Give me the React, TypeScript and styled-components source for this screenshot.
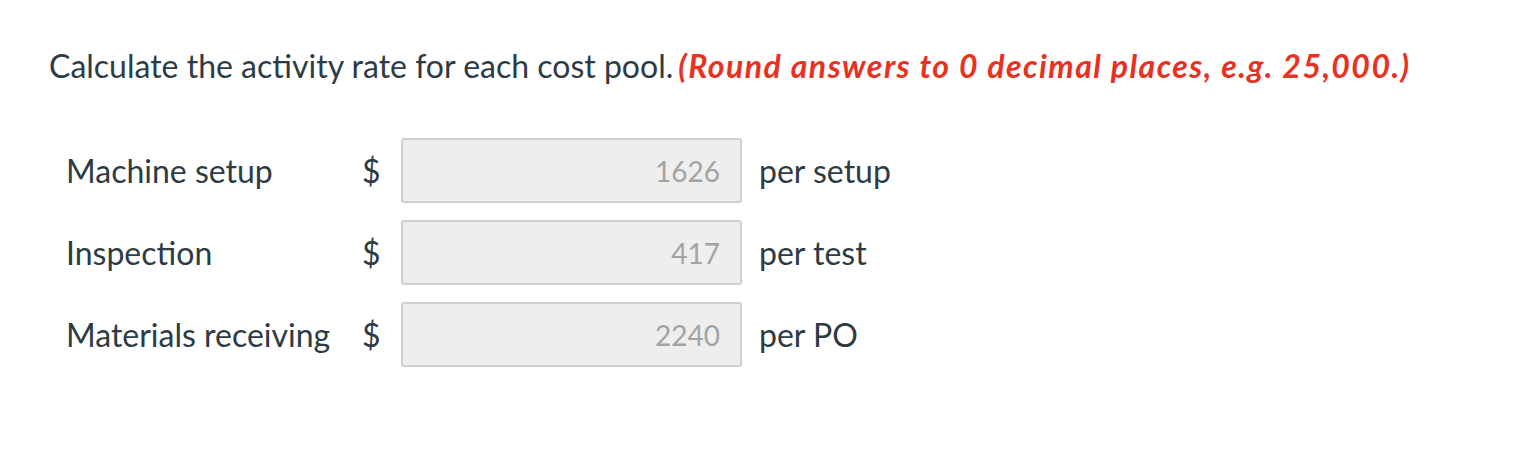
import React from "react";
import styled, { createGlobalStyle } from "styled-components";

const Global = createGlobalStyle`
  html, body { margin: 0; padding: 0; background: #fff; }
  body { font-family: Lato, "Noto Sans", sans-serif; color: #2d3b45; }
`;

const Page = styled.div`
  padding: 44px 0 0 49px;
`;

const Prompt = styled.p`
  margin: 0;
  font-size: 32px;
  line-height: 44px;
  color: #2d3b45;
`;

const Hint = styled.strong`
  margin-left: 5px;
  color: #e8311e;
  font-style: italic;
  font-weight: 700;
  letter-spacing: 1.45px;
`;

const Rows = styled.div`
  display: flex;
  flex-direction: column;
  gap: 17px;
  margin-top: 50px;
  padding-left: 17px;
`;

const Row = styled.div`
  display: flex;
  align-items: center;
  height: 65px;
`;

const Label = styled.span`
  width: 296px;
  font-size: 32px;
  color: #2d3b45;
`;

const Dollar = styled.span`
  width: 39px;
  font-size: 32px;
  color: #2d3b45;
`;

const Field = styled.div`
  box-sizing: border-box;
  width: 341px;
  height: 65px;
  border: 2px solid #cfcfcf;
  border-radius: 3px;
  background: #eeeeee;
  display: flex;
  align-items: center;
  justify-content: flex-end;
  padding-right: 20px;
  font-size: 28px;
  color: #a3a3a3;
`;

const Unit = styled.span`
  margin-left: 17px;
  font-size: 32px;
  color: #2d3b45;
`;

const rows = [
  { label: "Machine setup", value: "1626", unit: "per setup" },
  { label: "Inspection", value: "417", unit: "per test" },
  { label: "Materials receiving", value: "2240", unit: "per PO" },
];

export default function App() {
  return (
    <>
      <Global />
      <Page>
        <Prompt>
          Calculate the activity rate for each cost pool.
          <Hint>(Round answers to 0 decimal places, e.g. 25,000.)</Hint>
        </Prompt>
        <Rows>
          {rows.map((r) => (
            <Row key={r.label}>
              <Label>{r.label}</Label>
              <Dollar>$</Dollar>
              <Field>{r.value}</Field>
              <Unit>{r.unit}</Unit>
            </Row>
          ))}
        </Rows>
      </Page>
    </>
  );
}
